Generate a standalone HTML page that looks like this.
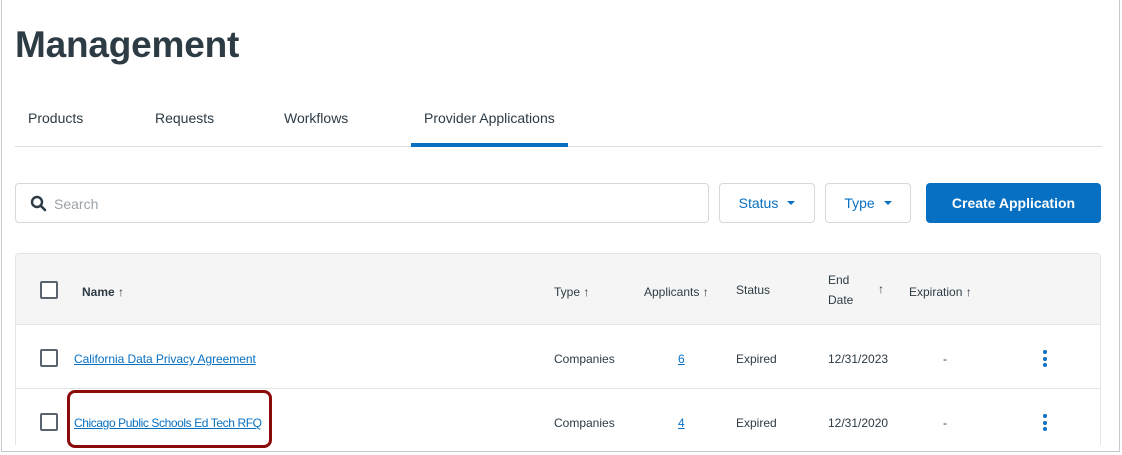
<!DOCTYPE html>
<html><head><meta charset="utf-8"><style>
*{box-sizing:border-box;margin:0;padding:0}
html,body{width:1122px;height:455px;overflow:hidden}
body{background:#fff;font-family:"Liberation Sans",sans-serif;color:#2d3b45;position:relative}
.frame{position:absolute;left:1px;top:0;width:1119px;height:452px;border:1px solid #c8c8c8;border-top:none}
.abs{position:absolute}
h1{position:absolute;left:15px;top:24px;font-size:37px;font-weight:bold;color:#2d3b45;letter-spacing:-0.2px}
.tab{position:absolute;top:110px;font-size:14px;color:#2d3b45}
.tabline{position:absolute;left:15px;top:146px;width:1087px;height:1px;background:#dcdcdc}
.active{position:absolute;left:411px;top:143px;width:157px;height:4px;background:#0770c2}
.box{position:absolute;border:1px solid #d5d9dd;border-radius:4px;background:#fff}
.btn{color:#0770c2;font-size:14px;display:flex;align-items:center;justify-content:center}
.caret{display:inline-block;width:0;height:0;border-left:4px solid transparent;border-right:4px solid transparent;border-top:4px solid #0770c2;margin-left:9px}
.table{position:absolute;left:15px;top:253px;width:1086px;height:192px;border:1px solid #e2e4e6;border-bottom:none;border-radius:4px 4px 0 0;overflow:hidden}
.thead{position:absolute;left:0;top:0;width:100%;height:71px;background:#f5f5f5;border-bottom:1px solid #e2e4e6}
.row2{position:absolute;left:0;top:134px;width:100%;height:1px;background:#e2e4e6}
.cb{position:absolute;width:18px;height:18px;border:2px solid #5a6470;border-radius:2px;background:#fff}
.t{position:absolute;font-size:12px;color:#2d3b45;white-space:nowrap}
.link{color:#0770c2;text-decoration:underline}
.dots{position:absolute;width:4px}
.dots i{display:block;width:4px;height:4px;border-radius:2px;background:#0770c2;margin-bottom:2.5px}
</style></head><body>
<div class="frame"></div>
<h1>Management</h1>
<div class="tab" style="left:28px">Products</div>
<div class="tab" style="left:155px">Requests</div>
<div class="tab" style="left:284px">Workflows</div>
<div class="tab" style="left:424px">Provider Applications</div>
<div class="tabline"></div>
<div class="active"></div>

<div class="box" style="left:15px;top:183px;width:694px;height:40px"></div>
<svg class="abs" style="left:30px;top:195px" width="17" height="17" viewBox="0 0 17 17"><circle cx="7" cy="7" r="5" fill="none" stroke="#2d3b45" stroke-width="2.4"/><line x1="10.5" y1="10.5" x2="15" y2="15" stroke="#2d3b45" stroke-width="2.6" stroke-linecap="round"/></svg>
<div class="abs" style="left:54px;top:196px;font-size:14px;color:#9aa3ab">Search</div>
<div class="box btn" style="left:719px;top:183px;width:96px;height:40px">Status<span class="caret"></span></div>
<div class="box btn" style="left:825px;top:183px;width:86px;height:40px">Type<span class="caret"></span></div>
<div class="abs btn" style="left:926px;top:183px;width:175px;height:40px;background:#0770c2;color:#fff;border-radius:4px;font-weight:bold;font-size:14px">Create Application</div>

<div class="table">
<div class="thead"></div>
<div class="row2"></div>
<div class="cb" style="left:24px;top:27px"></div>
<div class="t" style="left:66px;top:31px;font-weight:bold">Name <span style="font-weight:normal">↑</span></div>
<div class="t" style="left:538px;top:31px">Type ↑</div>
<div class="t" style="left:628px;top:31px">Applicants ↑</div>
<div class="t" style="left:720px;top:29px">Status</div>
<div class="t" style="left:812px;top:19px">End</div>
<div class="t" style="left:812px;top:39px">Date</div>
<div class="t" style="left:862px;top:28px">↑</div>
<div class="t" style="left:893px;top:31px">Expiration ↑</div>

<div class="cb" style="left:24px;top:95px"></div>
<div class="t link" style="left:58px;top:98px;letter-spacing:-0.05px">California Data Privacy Agreement</div>
<div class="t" style="left:538px;top:98px">Companies</div>
<div class="t link" style="left:662px;top:98px">6</div>
<div class="t" style="left:720px;top:98px">Expired</div>
<div class="t" style="left:812px;top:98px">12/31/2023</div>
<div class="t" style="left:927px;top:98px">-</div>
<div class="dots" style="left:1027px;top:96px"><i></i><i></i><i></i></div>

<div class="cb" style="left:24px;top:159px"></div>
<div class="t link" style="left:58px;top:162px;letter-spacing:-0.4px">Chicago Public Schools Ed Tech RFQ</div>
<div class="t" style="left:538px;top:162px">Companies</div>
<div class="t link" style="left:662px;top:162px">4</div>
<div class="t" style="left:720px;top:162px">Expired</div>
<div class="t" style="left:812px;top:162px">12/31/2020</div>
<div class="t" style="left:927px;top:162px">-</div>
<div class="dots" style="left:1027px;top:160px"><i></i><i></i><i></i></div>
</div>
<div class="abs" style="left:67px;top:390px;width:205px;height:58px;border:3px solid #8b0a0a;border-radius:8px"></div>
<div class="abs" style="left:0;top:452px;width:1122px;height:3px;background:#fff"></div>
</body></html>
